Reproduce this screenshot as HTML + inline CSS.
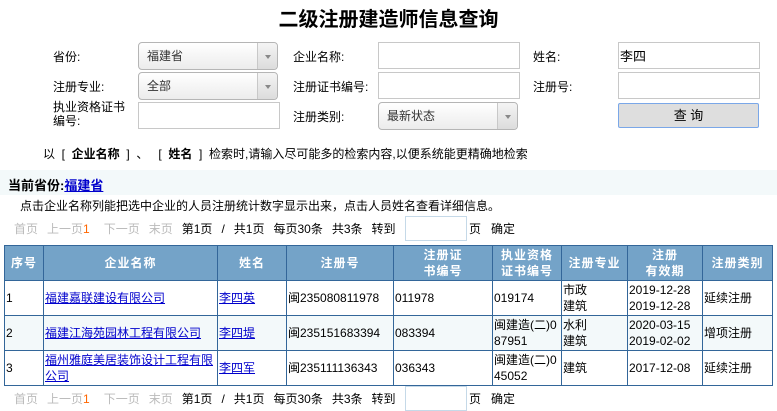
<!DOCTYPE html>
<html><head><meta charset="utf-8"><style>
*{margin:0;padding:0;box-sizing:border-box}
body{width:777px;height:411px;background:#fff;font-family:"Liberation Sans","Noto Sans CJK SC",sans-serif;font-size:12px;color:#000;position:relative;overflow:hidden}
.a{position:absolute;white-space:nowrap}
.inp{position:absolute;border:1px solid #c8c8c8;background:#fff;height:27px}
.sel{position:absolute;border:1px solid #b5b5b5;border-radius:4px;background:linear-gradient(#fff,#ececec);height:28px;padding:0 0 0 8px;line-height:26px;color:#333}
.sel .ar{position:absolute;right:0;top:0;width:20px;height:26px;border-left:1px solid #c8c8c8;background:linear-gradient(#f4f4f4,#dcdcdc);border-radius:0 4px 4px 0}
.sel .ar:after{content:"";position:absolute;left:7px;top:12px;border:3px solid transparent;border-top:4px solid #888}
a{color:#00c;text-decoration:underline}
.g{color:#bbb}
.pg span{display:inline-block;margin-right:9px}
table{position:absolute;left:4px;top:245px;width:768px;border-collapse:collapse;table-layout:fixed}
td,th{border:1px solid #336699;padding:0 1px;vertical-align:middle;line-height:16px;font-size:12px;font-weight:normal}
th{background:#74a3c8;color:#fff;font-weight:bold;height:35px;letter-spacing:1px;text-align:center}
td{height:35px}
tr.s td{background:#f3f9fa}
</style></head><body>
<div class="a" style="left:0;width:777px;text-align:center;top:3px;font-size:20px;font-weight:bold">二级注册建造师信息查询</div>

<div class="a" style="left:53px;top:48px">省份:</div>
<div class="sel" style="left:138px;top:42px;width:140px">福建省<div class="ar"></div></div>
<div class="a" style="left:293px;top:48px">企业名称:</div>
<div class="inp" style="left:378px;top:42px;width:142px"></div>
<div class="a" style="left:533px;top:48px">姓名:</div>
<div class="inp" style="left:618px;top:42px;width:142px;padding:3px 0 0 1px;font-size:13px">李四</div>

<div class="a" style="left:53px;top:78px">注册专业:</div>
<div class="sel" style="left:138px;top:72px;width:140px">全部<div class="ar"></div></div>
<div class="a" style="left:293px;top:78px">注册证书编号:</div>
<div class="inp" style="left:378px;top:72px;width:142px"></div>
<div class="a" style="left:533px;top:78px">注册号:</div>
<div class="inp" style="left:618px;top:72px;width:142px"></div>

<div class="a" style="left:53px;top:100px;line-height:14px">执业资格证书<br>编号:</div>
<div class="inp" style="left:138px;top:102px;width:142px"></div>
<div class="a" style="left:293px;top:108px">注册类别:</div>
<div class="sel" style="left:378px;top:102px;width:140px">最新状态<div class="ar"></div></div>
<div class="a" style="left:618px;top:103px;width:141px;height:25px;border:1px solid #7aa7e8;background:#dedede;text-align:center;line-height:23px;font-size:13px;border-radius:2px">查 询</div>

<div class="a" style="left:43px;top:145px;word-spacing:0">以&nbsp;&nbsp;[&nbsp;&nbsp;<b>企业名称</b>&nbsp;&nbsp;]&nbsp;&nbsp;、&nbsp;&nbsp;&nbsp;[&nbsp;&nbsp;<b>姓名</b>&nbsp;&nbsp;]&nbsp;&nbsp;检索时,请输入尽可能多的检索内容,以便系统能更精确地检索</div>

<div class="a" style="left:0;top:170px;width:777px;height:25px;background:#f3f9fa"></div>
<div class="a" style="left:8px;top:175px;font-size:13px;font-weight:bold">当前省份:<a href="#" style="font-weight:bold">福建省</a></div>
<div class="a" style="left:20px;top:197px">点击企业名称列能把选中企业的人员注册统计数字显示出来，点击人员姓名查看详细信息。</div>

<div class="a pg" style="left:14px;top:220px"><span class="g">首页</span><span class="g">上一页<span style="color:#f60;margin:0">1</span></span><span class="g" style="margin-left:5px">下一页</span><span class="g">末页</span><span>第1页</span><span>/</span><span>共1页</span><span>每页30条</span><span>共3条</span><span style="margin:0">转到</span></div>
<div class="inp" style="left:405px;top:216px;width:62px;height:25px;border-color:#c5d9e8"></div>
<div class="a" style="left:469px;top:220px">页&nbsp;&nbsp;&nbsp;确定</div>

<table>
<colgroup><col style="width:39px"><col style="width:174px"><col style="width:69px"><col style="width:107px"><col style="width:99px"><col style="width:69px"><col style="width:66px"><col style="width:75px"><col style="width:70px"></colgroup>
<tr><th>序号</th><th>企业名称</th><th>姓名</th><th>注册号</th><th>注册证<br>书编号</th><th>执业资格<br>证书编号</th><th>注册专业</th><th>注册<br>有效期</th><th>注册类别</th></tr>
<tr><td>1</td><td><a href="#">福建嘉联建设有限公司</a></td><td><a href="#">李四英</a></td><td>闽235080811978</td><td>011978</td><td>019174</td><td>市政<br>建筑</td><td>2019-12-28<br>2019-12-28</td><td>延续注册</td></tr>
<tr class="s"><td>2</td><td><a href="#">福建江海苑园林工程有限公司</a></td><td><a href="#">李四堤</a></td><td>闽235151683394</td><td>083394</td><td>闽建造(二)0<br>87951</td><td>水利<br>建筑</td><td>2020-03-15<br>2019-02-02</td><td>增项注册</td></tr>
<tr><td>3</td><td style="white-space:normal"><a href="#">福州雅庭美居装饰设计工程有限公司</a></td><td><a href="#">李四军</a></td><td>闽235111136343</td><td>036343</td><td>闽建造(二)0<br>45052</td><td>建筑</td><td>2017-12-08</td><td>延续注册</td></tr>
</table>

<div class="a pg" style="left:14px;top:390px"><span class="g">首页</span><span class="g">上一页<span style="color:#f60;margin:0">1</span></span><span class="g" style="margin-left:5px">下一页</span><span class="g">末页</span><span>第1页</span><span>/</span><span>共1页</span><span>每页30条</span><span>共3条</span><span style="margin:0">转到</span></div>
<div class="inp" style="left:405px;top:386px;width:62px;height:25px;border-color:#c5d9e8"></div>
<div class="a" style="left:469px;top:390px">页&nbsp;&nbsp;&nbsp;确定</div>
</body></html>
